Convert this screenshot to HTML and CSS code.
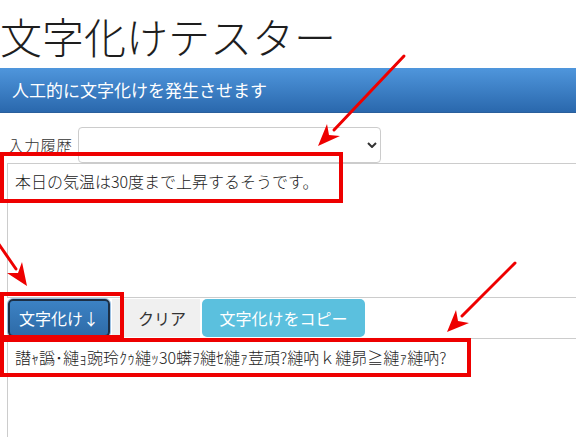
FILE: index.html
```html
<!DOCTYPE html>
<html lang="ja">
<head>
    <meta charset="UTF-8">
    <meta name="viewport" content="width=device-width, initial-scale=1.0">
    <title>文字化けテスター</title>
    <link rel="stylesheet" href="styles.css">
</head>
<body>
    <h1 class="title">文字化けテスター</h1>

    <div class="panel">
        <div class="panel-heading">人工的に文字化けを発生させます</div>
        <div class="panel-body">
            <!-- history select -->
            <div class="history">
                <label for="history">入力履歴</label>
                <div class="select-wrap">
                    <select id="history"><option></option></select>
                    <svg class="chevron" width="10" height="6" viewBox="0 0 10 6">
                        <path d="M1 1 L5 5 L9 1" fill="none" stroke="#333" stroke-width="2"/>
                    </svg>
                </div>
            </div>

            <textarea class="textbox src">本日の気温は30度まで上昇するそうです。</textarea>

            <div class="actions">
                <button class="btn btn-primary">文字化け↓</button>
                <button class="btn btn-default">クリア</button>
                <button class="btn btn-info">文字化けをコピー</button>
            </div>

            <textarea class="textbox dst" readonly>譛ｬ譌･縺ｮ豌玲ｸｩ縺ｯ30蠎ｦ縺ｾ縺ｧ荳頑?縺吶ｋ縺昴≧縺ｧ縺吶?</textarea>
        </div>
    </div>

    <!-- red annotation marks drawn over the screenshot -->
    <svg class="marks" width="576" height="437" viewBox="0 0 576 437">
        <g fill="none" stroke="#ee0000" stroke-width="4">
            <rect x="2" y="154" width="339" height="47"/>
            <rect x="2" y="294" width="120" height="43"/>
            <rect x="2" y="340" width="467" height="35"/>
        </g>
        <g stroke="#ee0000" stroke-width="3" stroke-linecap="round">
            <line x1="404" y1="56" x2="334" y2="130"/>
            <line x1="-2" y1="243" x2="16" y2="269"/>
            <line x1="515" y1="263" x2="462" y2="316"/>
        </g>
        <g fill="#ee0000">
            <polygon points="318,146 340,136 329,135 327,124"/>
            <polygon points="27,286 22,262 18,273 7,273"/>
            <polygon points="447,332 469,323 458,321 456,310"/>
        </g>
    </svg>
</body>
</html>
```

FILE: styles.css
```css
/* General styles */
html, body {
    margin: 0;
    padding: 0;
    overflow: hidden;
}

body {
    position: relative;
    width: 576px;
    height: 437px;
    background-color: #ffffff;
    font-family: "Noto Sans CJK JP", "Noto Sans", sans-serif;
    color: #333;
}

/* Title */
.title {
    margin: 0;
    height: 68px;
    padding-top: 8px;
    box-sizing: border-box;
    font-size: 42px;
    font-weight: 300;
    line-height: 56px;
    color: #1e1e1e;
    white-space: nowrap;
}

/* Panel */
.panel-heading {
    height: 45px;
    box-sizing: border-box;
    padding-left: 12px;
    line-height: 44px;
    font-size: 17px;
    color: #ffffff;
    background: linear-gradient(#4f96dc, #2a68ad);
    border-bottom: 1px solid #2a5f9c;
}

.panel-body {
    padding: 14px 0 0 7px;
}

/* History select */
.history {
    display: flex;
    align-items: center;
    gap: 6px;
    height: 36px;
}

.history label {
    padding-left: 1px;
    font-size: 16px;
    font-weight: 300;
    color: #333;
}

.select-wrap {
    position: relative;
}

.select-wrap select {
    display: block;
    width: 303px;
    height: 36px;
    border: 1px solid #cccccc;
    border-radius: 4px;
    background-color: #ffffff;
    appearance: none;
}

.chevron {
    position: absolute;
    right: 4px;
    top: 15px;
}

/* Text boxes */
.textbox {
    display: block;
    width: 100%;
    box-sizing: border-box;
    border: 1px solid #cccccc;
    border-right: none;
    margin: 0;
    resize: none;
    font-family: "Noto Sans CJK JP", sans-serif;
    font-size: 16px;
    font-weight: 300;
    line-height: 24px;
    color: #222;
    padding: 5px 7px;
}

.src {
    height: 135px;
}

.dst {
    height: 120px;
    padding-top: 6px;
}

/* Buttons */
.actions {
    display: flex;
    gap: 2px;
    padding: 1px 0 1px 1px;
}

.btn {
    height: 38px;
    padding: 0 8px;
    font-family: "Noto Sans CJK JP", sans-serif;
    font-size: 16px;
    white-space: nowrap;
    border: none;
    border-radius: 5px;
    cursor: pointer;
}

.btn-primary {
    width: 102px;
    color: #ffffff;
    background: linear-gradient(#3c82c4, #2e6ba8);
    border: 2px solid #1c2f45;
    box-shadow: 0 0 0 1px #9cc0e2;
}

.btn-default {
    width: 88px;
    padding-left: 20px;
    color: #333;
    background-color: #f0f0f0;
    border-radius: 0;
}

.btn-info {
    width: 163px;
    color: #ffffff;
    background-color: #5bc0de;
}

/* Annotation overlay */
.marks {
    position: absolute;
    left: 0;
    top: 0;
    pointer-events: none;
}
```
